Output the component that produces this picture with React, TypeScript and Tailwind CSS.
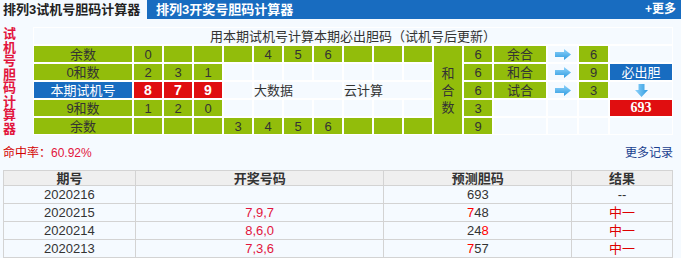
import React from 'react';

const G = 'bg-[#92bd0b]';
const L = 'bg-[#f5faff]';

const RightArrow = () => (
  <svg width="16" height="11" viewBox="0 0 16 11">
    <defs>
      <linearGradient id="ra" x1="0" y1="0" x2="0" y2="1">
        <stop offset="0" stopColor="#8fd3fb" />
        <stop offset="1" stopColor="#2f9be0" />
      </linearGradient>
    </defs>
    <path d="M0 3h9V0l7 5.5L9 11V8H0z" fill="url(#ra)" />
  </svg>
);

const DownArrow = () => (
  <svg width="13" height="13" viewBox="0 0 13 13">
    <defs>
      <linearGradient id="da" x1="0" y1="0" x2="1" y2="0">
        <stop offset="0" stopColor="#8fd3fb" />
        <stop offset="1" stopColor="#2f9be0" />
      </linearGradient>
    </defs>
    <path d="M3.5 0h6v6H13l-6.5 7L0 6h3.5z" fill="url(#da)" />
  </svg>
);

type CellProps = { bg?: string; className?: string; children?: React.ReactNode };

const Cell: React.FC<CellProps> = ({ bg = L, className = '', children }) => (
  <div className={`${bg} flex items-center justify-center text-[13px] leading-none text-[#333] ${className}`}>
    {children}
  </div>
);

const history = [
  { issue: '2020216', draw: '', pred: [['693', false]], result: '--' },
  { issue: '2020215', draw: '7,9,7', pred: [['7', true], ['48', false]], result: '中一' },
  { issue: '2020214', draw: '8,6,0', pred: [['24', false], ['8', true]], result: '中一' },
  { issue: '2020213', draw: '7,3,6', pred: [['7', true], ['57', false]], result: '中一' },
] as const;

export default function App() {
  return (
    <div className="w-[681px] h-[258px] overflow-hidden bg-[#f5faff] font-['Liberation_Sans','Noto_Sans_CJK_SC',sans-serif]">
      {/* Tabs */}
      <div className="flex h-[19px] bg-[#186cc0] items-stretch">
        <div className="w-[147px] bg-[#f5faff] pl-[3px] text-[13px] font-bold text-[#222] leading-[19px]">
          排列3试机号胆码计算器
        </div>
        <div className="pl-[9px] text-[13px] font-bold text-white leading-[19px]">排列3开奖号胆码计算器</div>
        <div className="ml-auto pr-[5px] text-[12px] font-bold text-white leading-[19px]">+更多</div>
      </div>

      {/* Calculator */}
      <div className="flex mt-[8px] ml-[3px]">
        <div className="w-[30px] h-[108px] flex flex-col text-[13px] leading-[13.5px] font-bold text-[#e2153d]">
          {'试机号胆码计算器'.split('').map((c, i) => (
            <span key={i} className="h-[13.5px]">{c}</span>
          ))}
        </div>
        <div className="grid grid-cols-[98px_repeat(10,28px)_28px_28px_52px_29px_29px_62px] grid-rows-[repeat(6,16px)] gap-[2px] p-[1px] bg-white">
          <Cell className="col-span-17 text-[#222]">用本期试机号计算本期必出胆码（试机号后更新）</Cell>

          {/* row: 余数 */}
          <Cell bg={G}>余数</Cell>
          <Cell bg={G}>0</Cell>
          <Cell bg={G} />
          <Cell bg={G} />
          <Cell bg={G} />
          <Cell bg={G}>4</Cell>
          <Cell bg={G}>5</Cell>
          <Cell bg={G}>6</Cell>
          <Cell bg={G} />
          <Cell bg={G} />
          <Cell bg={G} />
          <div className={`${G} row-span-5 flex flex-col items-center justify-center text-[13px] leading-[17px] text-[#333]`}>
            <span>和</span>
            <span>合</span>
            <span>数</span>
          </div>
          <Cell bg={G}>6</Cell>
          <Cell bg={G}>余合</Cell>
          <Cell><RightArrow /></Cell>
          <Cell bg={G}>6</Cell>
          <Cell />

          {/* row: 0和数 */}
          <Cell bg={G}>0和数</Cell>
          <Cell bg={G}>2</Cell>
          <Cell bg={G}>3</Cell>
          <Cell bg={G}>1</Cell>
          <Cell />
          <Cell />
          <Cell />
          <Cell />
          <Cell />
          <Cell />
          <Cell />
          <Cell bg={G}>6</Cell>
          <Cell bg={G}>和合</Cell>
          <Cell><RightArrow /></Cell>
          <Cell bg={G}>9</Cell>
          <Cell bg="bg-[#186cc0]" className="!text-white">必出胆</Cell>

          {/* row: 本期试机号 */}
          <Cell bg="bg-[#186cc0]" className="!text-white">本期试机号</Cell>
          <Cell bg="bg-[#e00e10]" className="!text-white font-bold text-[14px]">8</Cell>
          <Cell bg="bg-[#e00e10]" className="!text-white font-bold text-[14px]">7</Cell>
          <Cell bg="bg-[#e00e10]" className="!text-white font-bold text-[14px]">9</Cell>
          <Cell />
          <Cell className="col-span-3 !justify-start">大数据</Cell>
          <Cell className="col-span-3 !justify-start">云计算</Cell>
          <Cell bg={G}>6</Cell>
          <Cell bg={G}>试合</Cell>
          <Cell><RightArrow /></Cell>
          <Cell bg={G}>3</Cell>
          <Cell><DownArrow /></Cell>

          {/* row: 9和数 */}
          <Cell bg={G}>9和数</Cell>
          <Cell bg={G}>1</Cell>
          <Cell bg={G}>2</Cell>
          <Cell bg={G}>0</Cell>
          <Cell />
          <Cell />
          <Cell />
          <Cell />
          <Cell />
          <Cell />
          <Cell />
          <Cell bg={G}>3</Cell>
          <Cell />
          <Cell />
          <Cell />
          <Cell bg="bg-[#e00e10]" className="!text-white font-bold text-[14px] font-['Liberation_Serif',serif]">693</Cell>

          {/* row: 余数 */}
          <Cell bg={G}>余数</Cell>
          <Cell bg={G} />
          <Cell bg={G} />
          <Cell bg={G} />
          <Cell bg={G}>3</Cell>
          <Cell bg={G}>4</Cell>
          <Cell bg={G}>5</Cell>
          <Cell bg={G}>6</Cell>
          <Cell bg={G} />
          <Cell bg={G} />
          <Cell bg={G} />
          <Cell bg={G}>9</Cell>
          <Cell />
          <Cell />
          <Cell />
          <Cell />
        </div>
      </div>

      {/* Hit rate */}
      <div className="flex items-center justify-between ml-[3px] w-[670px] mt-[11px] h-[14px]">
        <div className="text-[12px]">
          <span className="text-[#d40000]">命中率：</span>
          <span className="text-[#e2153d]">60.92%</span>
        </div>
        <a className="text-[12px] text-[#1a3f8f]">更多记录</a>
      </div>

      {/* History */}
      <table className="ml-[3px] mt-[10px] w-[670px] border-collapse text-[13px] text-[#333]">
        <colgroup>
          <col className="w-[132px]" />
          <col className="w-[249px]" />
          <col className="w-[188px]" />
          <col className="w-[101px]" />
        </colgroup>
        <thead>
          <tr className="bg-[#efefef] h-[15px]">
            {['期号', '开奖号码', '预测胆码', '结果'].map((h) => (
              <th key={h} className="border border-[#d3d3d3] font-bold leading-[13px] p-0">{h}</th>
            ))}
          </tr>
        </thead>
        <tbody>
          {history.map((r) => (
            <tr key={r.issue} className="h-[18px]">
              <td className="border border-[#d3d3d3] text-center p-0 leading-[16px]">{r.issue}</td>
              <td className="border border-[#d3d3d3] text-center p-0 leading-[16px] text-[#e2153d]">{r.draw}</td>
              <td className="border border-[#d3d3d3] text-center p-0 leading-[16px]">
                {r.pred.map(([t, hit], i) => (
                  <span key={i} className={hit ? 'text-[#ff0000]' : ''}>{t}</span>
                ))}
              </td>
              <td className={`border border-[#d3d3d3] text-center p-0 leading-[16px] ${r.result === '--' ? '' : 'text-[#dd0000]'}`}>
                {r.result}
              </td>
            </tr>
          ))}
        </tbody>
      </table>
    </div>
  );
}
